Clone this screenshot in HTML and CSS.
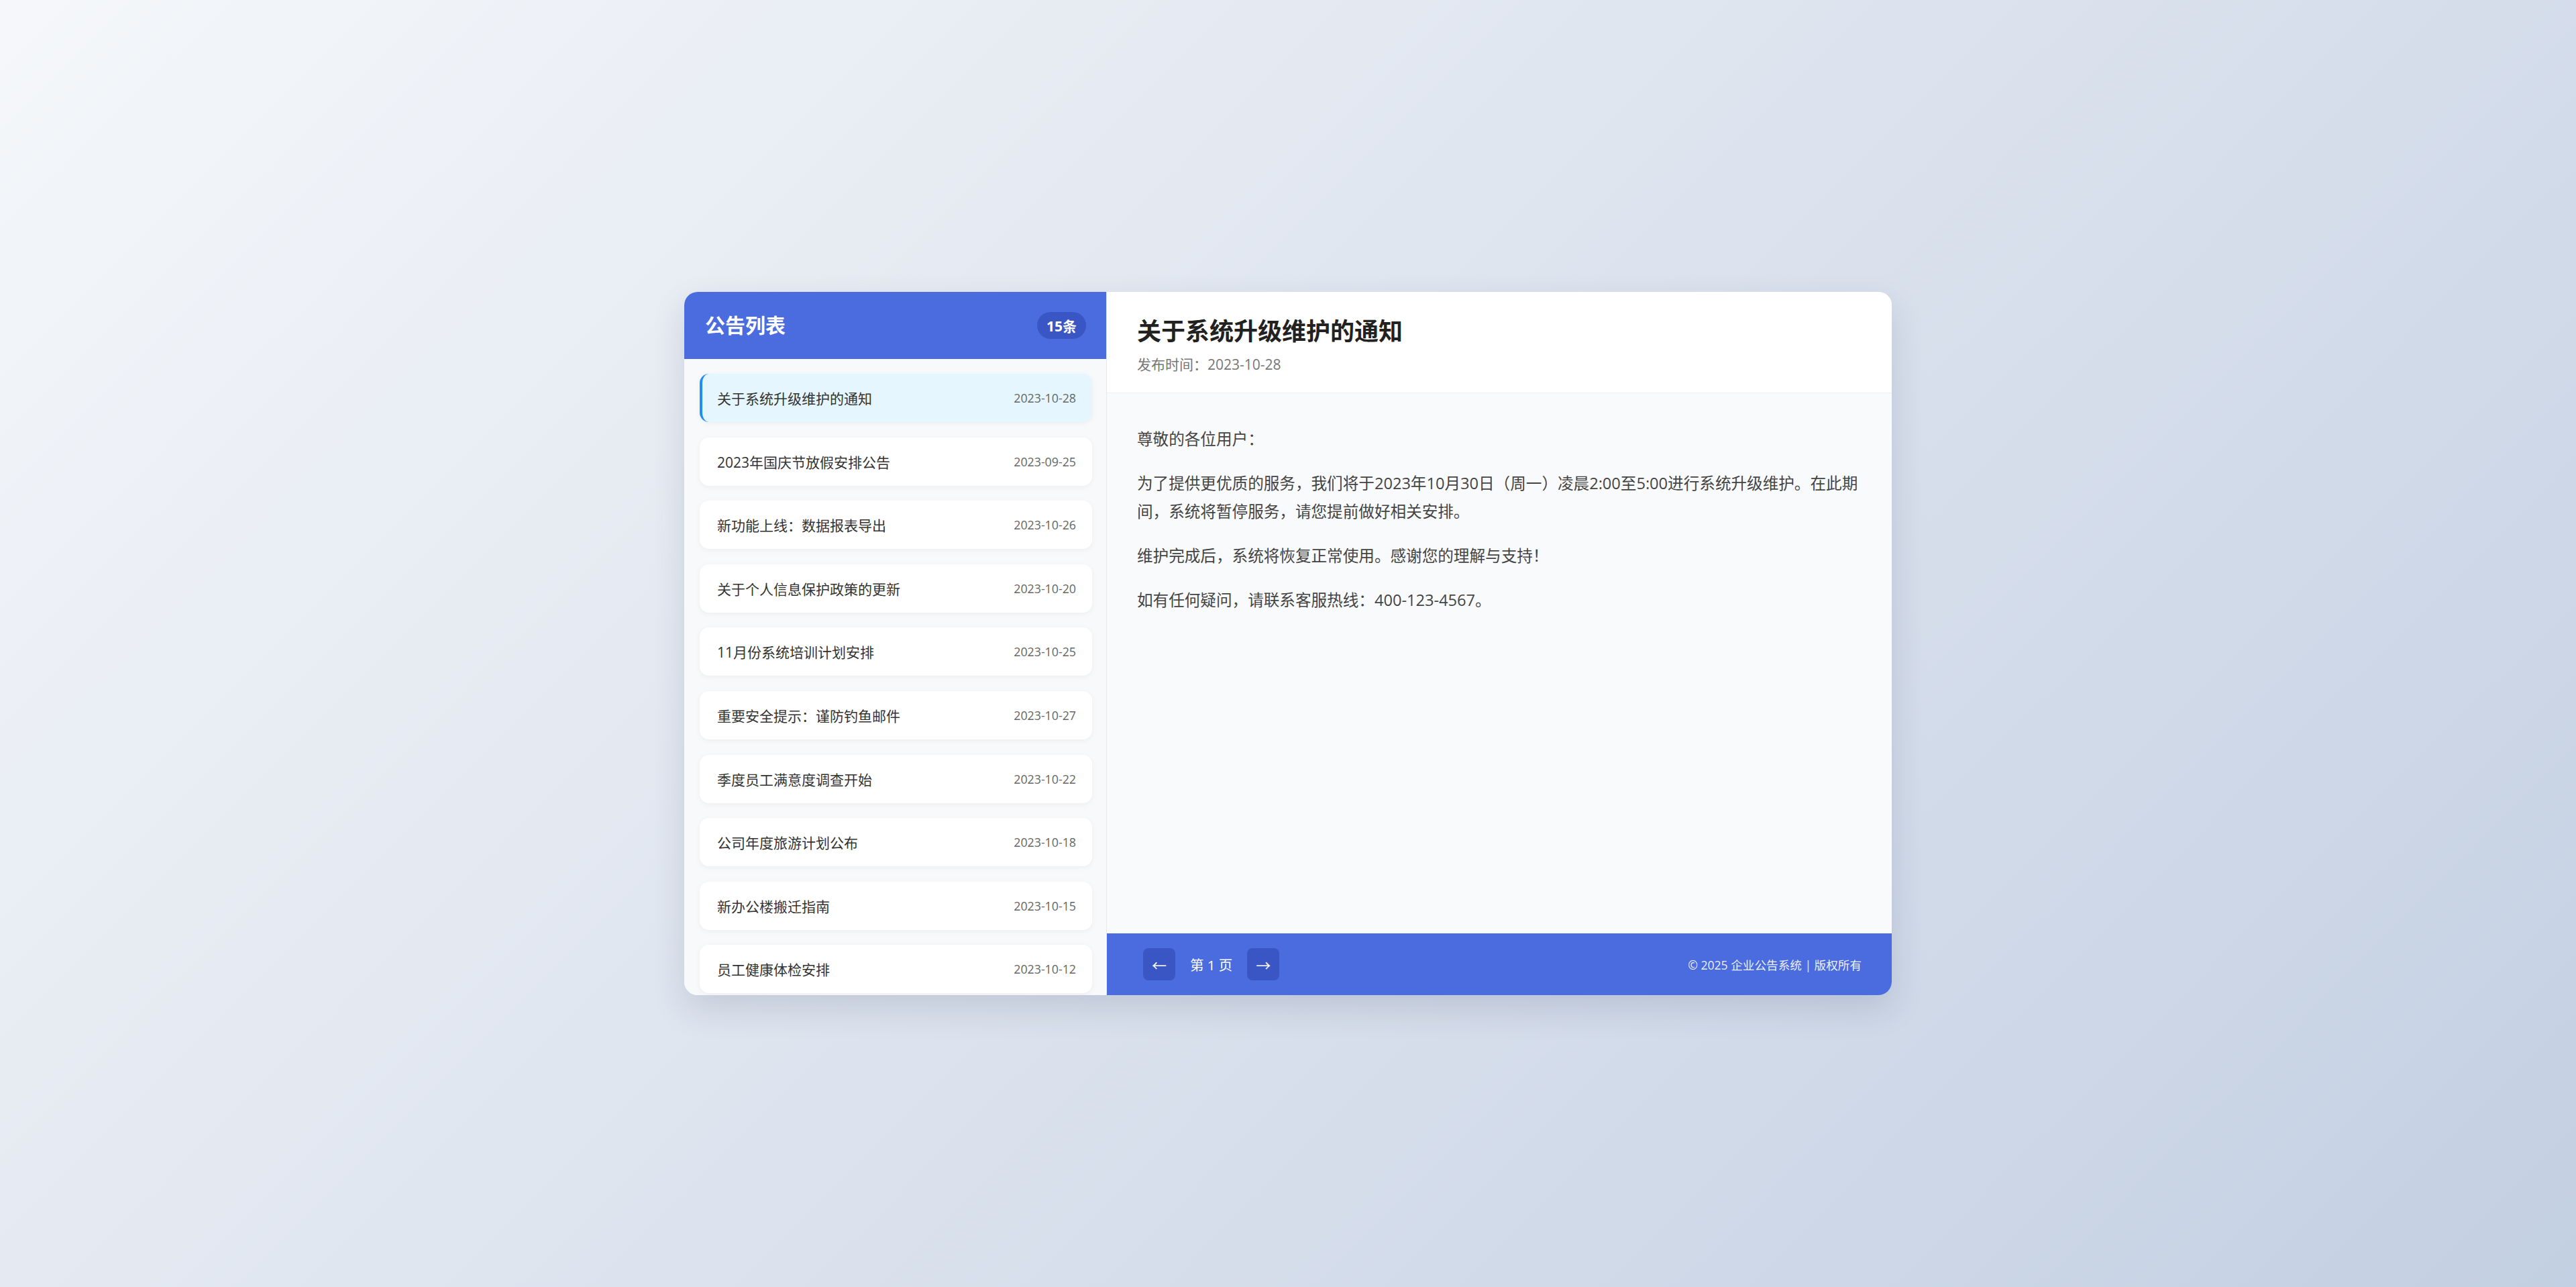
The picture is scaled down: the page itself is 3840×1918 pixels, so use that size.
FILE: index.html
```html
<!DOCTYPE html>
<html lang="zh-CN">
<head>
<meta charset="UTF-8">
<title>企业公告系统</title>
<link rel="stylesheet" href="styles.css">
</head>
<body>
<div class="card">
  <aside class="sidebar">
    <div class="side-head">
      <h2 class="side-title">公告列表</h2>
      <span class="badge">15条</span>
    </div>
    <ul class="list">
      <li class="item active"><span class="item-title">关于系统升级维护的通知</span><span class="item-date">2023-10-28</span></li>
      <li class="item"><span class="item-title">2023年国庆节放假安排公告</span><span class="item-date">2023-09-25</span></li>
      <li class="item"><span class="item-title">新功能上线：数据报表导出</span><span class="item-date">2023-10-26</span></li>
      <li class="item"><span class="item-title">关于个人信息保护政策的更新</span><span class="item-date">2023-10-20</span></li>
      <li class="item"><span class="item-title">11月份系统培训计划安排</span><span class="item-date">2023-10-25</span></li>
      <li class="item"><span class="item-title">重要安全提示：谨防钓鱼邮件</span><span class="item-date">2023-10-27</span></li>
      <li class="item"><span class="item-title">季度员工满意度调查开始</span><span class="item-date">2023-10-22</span></li>
      <li class="item"><span class="item-title">公司年度旅游计划公布</span><span class="item-date">2023-10-18</span></li>
      <li class="item"><span class="item-title">新办公楼搬迁指南</span><span class="item-date">2023-10-15</span></li>
      <li class="item"><span class="item-title">员工健康体检安排</span><span class="item-date">2023-10-12</span></li>
    </ul>
  </aside>
  <main class="detail">
    <header class="detail-head">
      <h1 class="detail-title">关于系统升级维护的通知</h1>
      <div class="detail-meta">发布时间：2023-10-28</div>
    </header>
    <section class="detail-body">
      <p>尊敬的各位用户：</p>
      <p>为了提供更优质的服务，我们将于2023年10月30日（周一）凌晨2:00至5:00进行系统升级维护。在此期间，系统将暂停服务，请您提前做好相关安排。</p>
      <p>维护完成后，系统将恢复正常使用。感谢您的理解与支持！</p>
      <p>如有任何疑问，请联系客服热线：400-123-4567。</p>
    </section>
    <footer class="detail-foot">
      <div class="pager">
        <button class="pg-btn" type="button">←</button>
        <span class="pg-text">第 1 页</span>
        <button class="pg-btn" type="button">→</button>
      </div>
      <div class="copy">© 2025 企业公告系统 | 版权所有</div>
    </footer>
  </main>
</div>
</body>
</html>
```

FILE: styles.css
```css
* {
  box-sizing: border-box;
}

html, body {
  margin: 0;
  padding: 0;
  height: 100%;
}

body {
  font-family: "Open Sans", "Noto Sans CJK SC", sans-serif;
  background: linear-gradient(135deg, #f5f7fa 0%, #c3cfe2 100%);
  display: flex;
  align-items: center;
  justify-content: center;
  min-height: 100vh;
}

.card {
  width: 1800px;
  height: 1048px;
  display: flex;
  background: #ffffff;
  border-radius: 20px;
  overflow: hidden;
  box-shadow: 0 20px 50px rgba(30, 45, 80, 0.14);
}

.sidebar {
  width: 630px;
  flex-shrink: 0;
  display: flex;
  flex-direction: column;
  background: #f8f9fa;
  border-right: 1px solid #e6e9ee;
}

.side-head {
  height: 100px;
  flex-shrink: 0;
  padding: 0 30px 0 31px;
  display: flex;
  align-items: center;
  justify-content: space-between;
  background: #4a6cde;
  color: #ffffff;
}

.side-title {
  margin: 0;
  font-size: 30px;
  font-weight: 700;
  line-height: 1;
}

.badge {
  height: 40px;
  min-width: 71px;
  padding: 0 14px;
  border-radius: 20px;
  background: #3a56c5;
  color: #ffffff;
  font-size: 21px;
  font-weight: 700;
  display: flex;
  align-items: center;
  justify-content: center;
}

.list {
  flex: 1;
  margin: 0;
  padding: 22px 21px 22px 23px;
  list-style: none;
  overflow: hidden;
}

.item {
  height: 72px;
  margin-bottom: 22.6px;
  padding: 0 24px 0 22px;
  border-left: 4px solid transparent;
  border-radius: 14px;
  background: #ffffff;
  box-shadow: 0 2px 8px rgba(0, 0, 0, 0.05);
  display: flex;
  align-items: center;
  justify-content: space-between;
}

.item.active {
  background: #e6f6ff;
  border-left-color: #1e8ff5;
}

.item-title {
  font-size: 21px;
  color: #333333;
}

.item-date {
  font-size: 17.8px;
  color: #666666;
}

.detail {
  flex: 1;
  display: flex;
  flex-direction: column;
  min-width: 0;
}

.detail-head {
  height: 151px;
  flex-shrink: 0;
  padding: 30px 45px 0;
  background: #ffffff;
  border-bottom: 1px solid #eceef1;
}

.detail-title {
  margin: 0 0 6px;
  font-size: 36px;
  font-weight: 700;
  line-height: 57px;
  color: #222222;
}

.detail-meta {
  font-size: 21px;
  line-height: 30px;
  color: #777777;
}

.detail-body {
  flex: 1;
  padding: 47px 45px 20px;
  background: #f9fafc;
}

.detail-body p {
  margin: 0 0 24px;
  font-size: 23.6px;
  line-height: 42px;
  color: #444444;
}

.detail-foot {
  height: 92px;
  flex-shrink: 0;
  padding: 0 45px 0 54px;
  background: #4a6cde;
  display: flex;
  align-items: center;
  justify-content: space-between;
  color: #ffffff;
}

.pager {
  display: flex;
  align-items: center;
  gap: 22px;
}

.pg-btn {
  width: 48px;
  height: 48px;
  padding: 0;
  border: none;
  border-radius: 8px;
  background: #3a56c5;
  color: #ffffff;
  font-family: inherit;
  font-size: 22px;
  display: flex;
  align-items: center;
  justify-content: center;
}

.pg-text {
  font-size: 20.5px;
  color: #ffffff;
}

.copy {
  font-size: 17.6px;
  color: rgba(255, 255, 255, 0.92);
}
```
